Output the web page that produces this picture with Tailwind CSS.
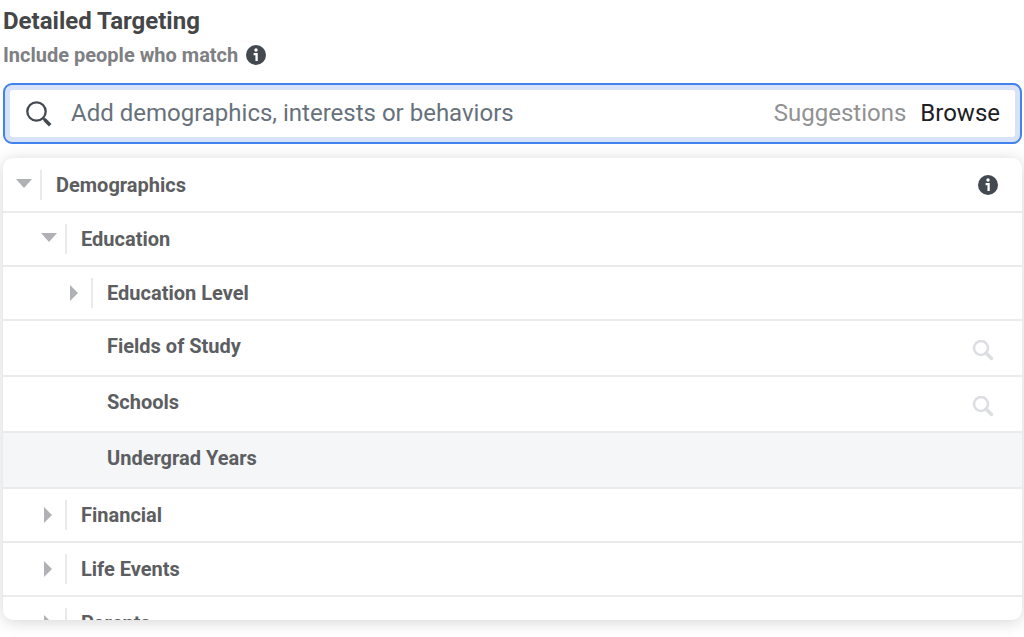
<!DOCTYPE html>
<html lang="en">
<head>
  <meta charset="UTF-8" />
  <title>Detailed Targeting</title>
  <meta name="viewport" content="width=device-width, initial-scale=1" />
  <script src="https://cdn.jsdelivr.net/npm/@tailwindcss/browser@4"></script>
</head>
<body class="bg-white font-[Roboto,sans-serif] text-[#5c5e61] min-h-screen">

  <main class="pl-[3px] pr-[2px] pt-[6px] pb-4">
    <h1 class="text-[24px] leading-[30px] font-bold text-[#444648]">Detailed Targeting</h1>
    <div class="flex items-center gap-2 h-[38px]">
      <label for="search" class="text-[20px] leading-[28px] font-bold text-[#7e8083]">Include people who match</label>
      <button type="button" aria-label="About matching">
        <svg class="w-5 h-5" viewBox="0 0 20 20"><circle cx="10" cy="10" r="10" fill="#444950"/><circle cx="10" cy="5" r="1.7" fill="#fff"/><path d="M7.6 9.2H10.6V16" fill="none" stroke="#fff" stroke-width="2.3"/></svg>
      </button>
    </div>

    <!-- search box -->
    <div class="mt-[9px] rounded-[9px] border-2 border-[#4282ee] bg-[#d9e3f8] p-[5px]">
      <div class="flex items-center h-[47px] rounded-[3px] bg-white px-[15px]">
        <svg class="w-7 h-7 shrink-0" viewBox="0 0 28 28" fill="none" stroke="#444950"><circle cx="11.5" cy="11.5" r="9.2" stroke-width="2.3"/><path d="M18 18L20 20" stroke-width="2.4"/><path d="M19.5 19.5L25.2 25.2" stroke-width="3.6"/></svg>
        <input id="search" type="text" placeholder="Add demographics, interests or behaviors" class="flex-1 min-w-0 ml-[18px] pb-[2px] text-[24px] leading-[32px] text-[#444950] placeholder:text-[#67717b] outline-none" />
        <button type="button" class="pb-[2px] text-[24px] leading-[32px] text-[#909294]">Suggestions</button>
        <button type="button" class="ml-[14px] pb-[2px] text-[24px] leading-[32px] text-[#1d2023]">Browse</button>
      </div>
    </div>

    <ul class="mt-[14px] h-[462px] overflow-hidden rounded-[10px] bg-white text-[20px] leading-[28px] font-bold shadow-[0_2px_16px_rgba(0,0,0,0.17)]">
      <li class="flex items-center h-[53px] pl-[13px] pr-6">
        <button type="button" aria-label="Collapse Demographics" class="w-[26px] h-[30px] border-r-2 border-[#e9eaec]">
          <svg class="w-4 h-4" viewBox="0 0 16 16"><path d="M0 2H16L8 11Z" fill="#afb1b5"/></svg>
        </button>
        <span class="ml-[14px] flex-1">Demographics</span>
        <button type="button" aria-label="About Demographics">
          <svg class="w-5 h-5" viewBox="0 0 20 20"><circle cx="10" cy="10" r="10" fill="#444950"/><circle cx="10" cy="5" r="1.7" fill="#fff"/><path d="M7.6 9.2H10.6V16" fill="none" stroke="#fff" stroke-width="2.3"/></svg>
        </button>
      </li>
      <li class="flex items-center h-[54px] pl-[38px] border-t-2 border-[#ebebec]">
        <button type="button" aria-label="Collapse Education" class="w-[26px] h-[30px] border-r-2 border-[#e9eaec]">
          <svg class="w-4 h-4" viewBox="0 0 16 16"><path d="M0 2H16L8 11Z" fill="#afb1b5"/></svg>
        </button>
        <span class="ml-[14px]">Education</span>
      </li>
      <li class="flex items-center h-[54px] pl-[64px] border-t-2 border-[#ebebec]">
        <button type="button" aria-label="Expand Education Level" class="w-[26px] h-[30px] border-r-2 border-[#e9eaec]">
          <svg class="w-4 h-4" viewBox="0 0 16 16"><path d="M3 0V16L11 8Z" fill="#afb1b5"/></svg>
        </button>
        <span class="ml-[14px]">Education Level</span>
      </li>
      <li class="flex items-center h-[56px] pl-[104px] pr-7 pb-1 border-t-2 border-[#ebebec]">
        <span class="flex-1">Fields of Study</span>
        <button type="button" aria-label="Search Fields of Study" class="mt-2">
          <svg class="w-[22px] h-[22px]" viewBox="0 0 22 22" fill="none" stroke="#dcdee2"><circle cx="9" cy="9" r="7" stroke-width="2.6"/><path d="M14 14L19.5 19.5" stroke-width="3.4" stroke-linecap="round"/></svg>
        </button>
      </li>
      <li class="flex items-center h-[56px] pl-[104px] pr-7 pb-1 border-t-2 border-[#ebebec]">
        <span class="flex-1">Schools</span>
        <button type="button" aria-label="Search Schools" class="mt-2">
          <svg class="w-[22px] h-[22px]" viewBox="0 0 22 22" fill="none" stroke="#dcdee2"><circle cx="9" cy="9" r="7" stroke-width="2.6"/><path d="M14 14L19.5 19.5" stroke-width="3.4" stroke-linecap="round"/></svg>
        </button>
      </li>
      <li class="flex items-center h-[56px] pl-[104px] pb-1 border-t-2 border-[#ebebec] bg-[#f4f6f8]">
        <span>Undergrad Years</span>
      </li>
      <li class="flex items-center h-[54px] pl-[38px] border-t-2 border-[#ebebec]">
        <button type="button" aria-label="Expand Financial" class="w-[26px] h-[30px] border-r-2 border-[#e9eaec]">
          <svg class="w-4 h-4" viewBox="0 0 16 16"><path d="M3 0V16L11 8Z" fill="#afb1b5"/></svg>
        </button>
        <span class="ml-[14px]">Financial</span>
      </li>
      <li class="flex items-center h-[54px] pl-[38px] border-t-2 border-[#ebebec]">
        <button type="button" aria-label="Expand Life Events" class="w-[26px] h-[30px] border-r-2 border-[#e9eaec]">
          <svg class="w-4 h-4" viewBox="0 0 16 16"><path d="M3 0V16L11 8Z" fill="#afb1b5"/></svg>
        </button>
        <span class="ml-[14px]">Life Events</span>
      </li>
      <li class="flex items-center h-[54px] pl-[38px] border-t-2 border-[#ebebec]">
        <button type="button" aria-label="Expand Parents" class="w-[26px] h-[30px] border-r-2 border-[#e9eaec]">
          <svg class="w-4 h-4" viewBox="0 0 16 16"><path d="M3 0V16L11 8Z" fill="#afb1b5"/></svg>
        </button>
        <span class="ml-[14px]">Parents</span>
      </li>
    </ul>
  </main>

</body>
</html>
